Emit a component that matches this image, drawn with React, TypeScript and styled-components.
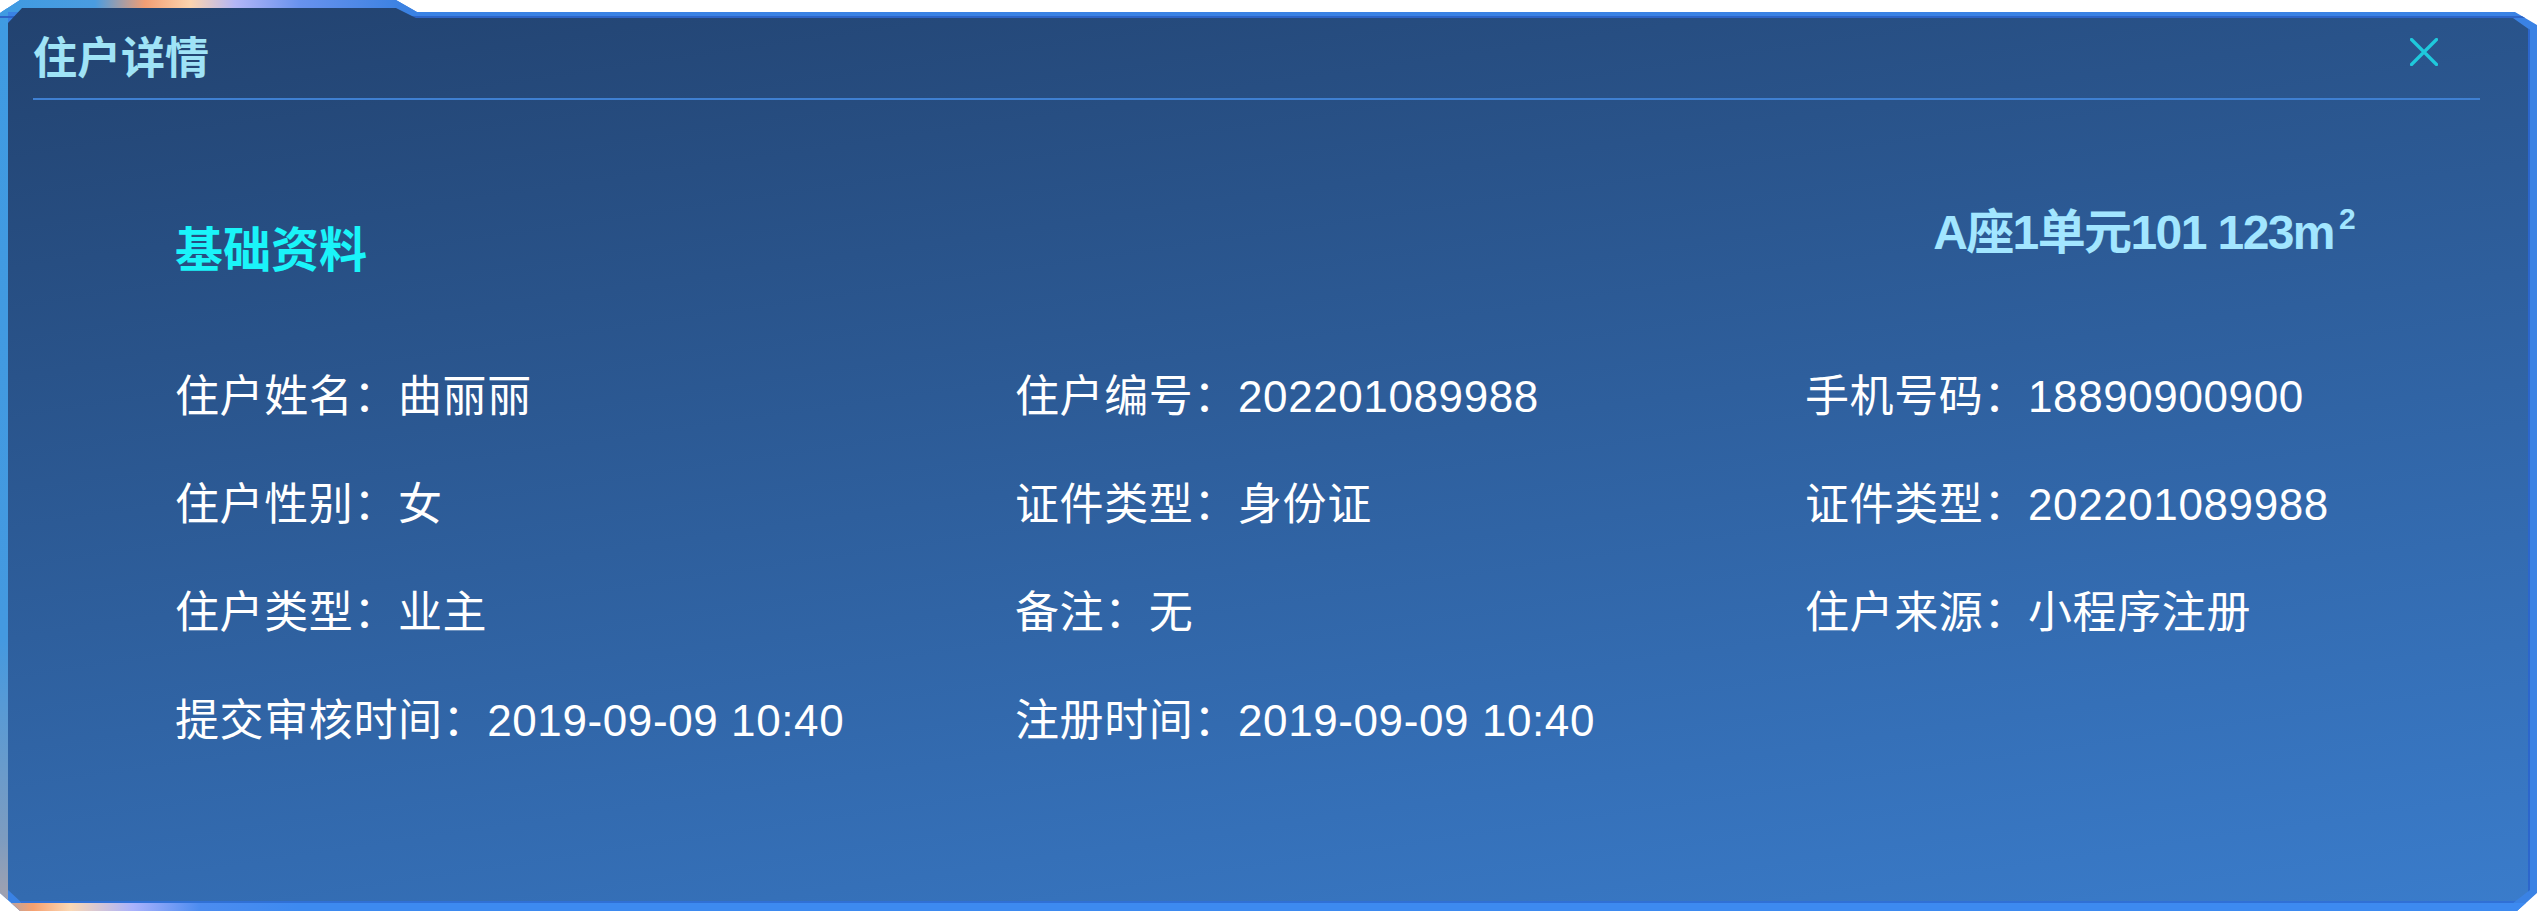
import React from "react";
import styled, { createGlobalStyle } from "styled-components";

const GlobalStyle = createGlobalStyle`
  html, body { margin: 0; padding: 0; background: #ffffff; }
  body { font-family: "Liberation Sans", "Noto Sans CJK SC", sans-serif; }
  * { box-sizing: border-box; }
`;

const Frame = styled.div`
  width: 2537px;
  height: 911px;
  padding: 8px 7px 8px 8px;
  clip-path: polygon(0 13px, 20px 0, 396px 0, 417px 12px, 2515px 12px, 100% 25px, 100% 893px, 2517px 100%, 20px 100%, 0 893px);
  background:
    linear-gradient(90deg, #3f9be2 0px, #4a9ce0 95px, #f29e74 145px, #fcd4ae 190px, #b3b6f6 235px, #6892ee 300px, #3c82e2 400px, #3a80e0 420px) 0 0 / 420px 12px no-repeat,
    linear-gradient(#2c64c8, #2c64c8) 0 16px / 100% 2px no-repeat,
    linear-gradient(90deg, #a0a4b4 0px, #f6a070 33px, #fcd8b4 70px, #aab2fc 133px, #4c8cf0 200px, #3d8af0 300px) 0 100% / 100% 8px no-repeat,
    linear-gradient(180deg, #3f9be2 0%, #4499e0 70%, #7d9cc0 92%, #a8a2ac 100%) 0 0 / 8px 100% no-repeat,
    #3a82e4;
`;

const Inner = styled.div`
  height: 100%;
  display: flex;
  flex-direction: column;
  clip-path: polygon(0 15px, 14px 0, 388px 0, 408px 10px, 2505px 10px, 100% 22px, 100% 882px, 2505px 100%, 14px 100%, 0 882px);
  background: linear-gradient(171.7deg, #22426f 0%, #3a7ccb 100%);
  box-shadow: inset -2px 0 0 #2c66cc, inset 0 -2px 0 #3070d6;
`;

const Header = styled.div`
  display: flex;
  justify-content: space-between;
  align-items: flex-start;
  padding: 29px 92px 0 25px;
`;

const Title = styled.h1`
  margin: 0;
  font-size: 44px;
  line-height: 44px;
  font-weight: 700;
  color: #9fe3f6;
`;

const CloseButton = styled.button`
  margin-top: 1px;
  padding: 0;
  border: none;
  background: transparent;
  width: 28px;
  height: 28px;
  display: flex;
  cursor: pointer;
`;

const Divider = styled.div`
  margin: 17px 50px 0 25px;
  height: 2px;
  background: #3f80d2;
`;

const Body = styled.div`
  padding: 0 176px 0 167px;
`;

const SectionHead = styled.div`
  margin-top: 109px;
  display: flex;
  justify-content: space-between;
  align-items: flex-start;
`;

const SectionTitle = styled.h2`
  margin: 18px 0 0 0;
  font-size: 48px;
  line-height: 48px;
  font-weight: 700;
  color: #1af4f9;
`;

const RoomInfo = styled.div`
  font-size: 48px;
  line-height: 48px;
  font-weight: 700;
  letter-spacing: -1.6px;
  color: #a2e6ff;
  white-space: nowrap;
`;

const Sup = styled.sup`
  font-size: 30px;
  line-height: 0;
  vertical-align: 20px;
  margin-left: 5px;
`;

const InfoGrid = styled.div`
  margin-top: 100px;
  display: grid;
  grid-template-columns: 840px 790px 1fr;
  row-gap: 64px;
`;

const Field = styled.div`
  font-size: 44px;
  line-height: 44px;
  letter-spacing: 0.6px;
  color: #ffffff;
  white-space: nowrap;
`;

const CloseIcon = () => (
  <svg width="28" height="28" viewBox="0 0 28 28">
    <path d="M1.5 1.5 L26.5 26.5 M26.5 1.5 L1.5 26.5" stroke="#1fc9dc" strokeWidth="3.2" strokeLinecap="round" fill="none" />
  </svg>
);

const fields: (string | null)[] = [
  "住户姓名：曲丽丽",
  "住户编号：202201089988",
  "手机号码：18890900900",
  "住户性别：女",
  "证件类型：身份证",
  "证件类型：202201089988",
  "住户类型：业主",
  "备注：无",
  "住户来源：小程序注册",
  "提交审核时间：2019-09-09 10:40",
  "注册时间：2019-09-09 10:40",
  null,
];

export default function App() {
  return (
    <>
      <GlobalStyle />
      <Frame>
        <Inner>
          <Header>
            <Title>住户详情</Title>
            <CloseButton aria-label="关闭">
              <CloseIcon />
            </CloseButton>
          </Header>
          <Divider />
          <Body>
            <SectionHead>
              <SectionTitle>基础资料</SectionTitle>
              <RoomInfo>
                A座1单元101 123m<Sup>2</Sup>
              </RoomInfo>
            </SectionHead>
            <InfoGrid>
              {fields.map((f, i) => (
                <Field key={i}>{f ?? ""}</Field>
              ))}
            </InfoGrid>
          </Body>
        </Inner>
      </Frame>
    </>
  );
}
